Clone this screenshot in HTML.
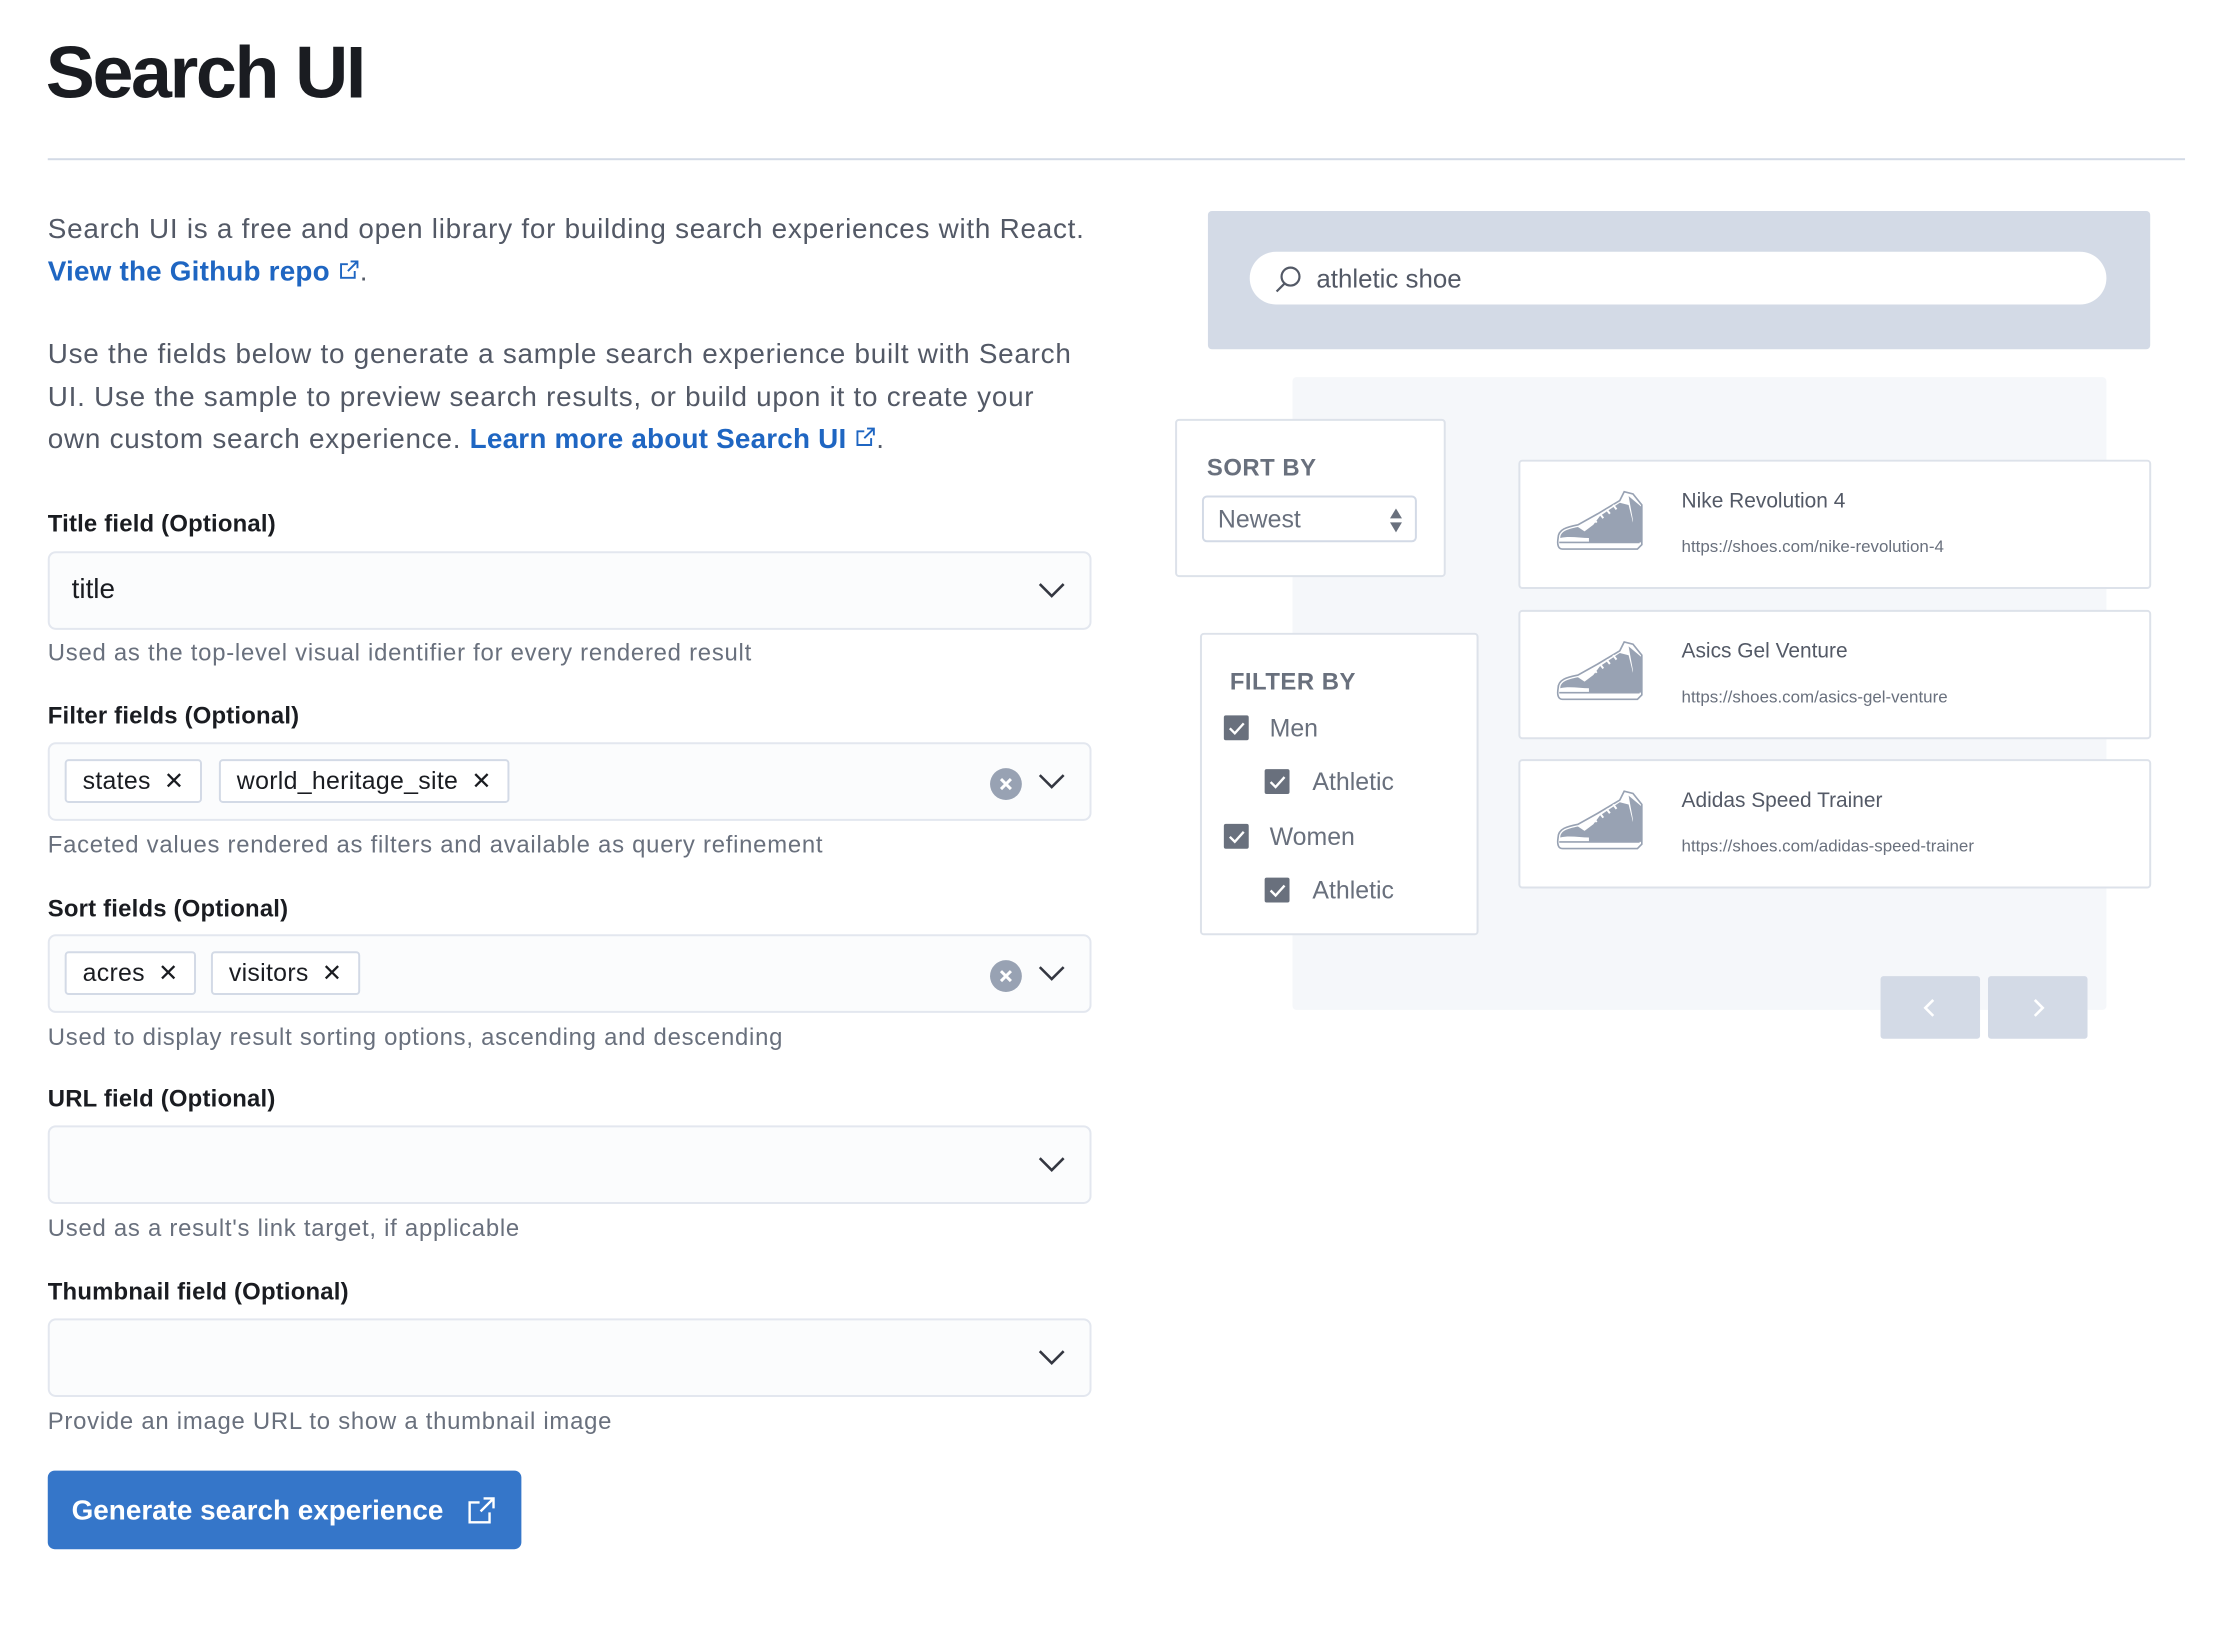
<!DOCTYPE html>
<html><head><meta charset="utf-8"><style>
*{box-sizing:border-box;margin:0;padding:0}
body{width:2234px;height:1630px;background:#fff;font-family:"Liberation Sans",sans-serif;position:relative;overflow:hidden;color:#343741}
#w{position:absolute;left:0;top:0;width:2234px;height:1630px;transform:scale(0.995);transform-origin:0 0}
.a{position:absolute;white-space:nowrap}
h1{position:absolute;left:46px;top:30px;font-size:74px;font-weight:bold;color:#1a1c21;letter-spacing:-2.4px}
.hr{position:absolute;left:48px;top:159px;width:2148px;height:2px;background:#d3dae6}
.p{font-size:28px;color:#535966;letter-spacing:0.75px}
.lnk{color:#1f66c2;font-weight:bold;letter-spacing:0.2px}
.lbl{font-size:24px;font-weight:bold;color:#1a1c21;letter-spacing:0.2px}
.help{font-size:24px;color:#69707d;letter-spacing:0.75px}
.box{position:absolute;left:48px;width:1049px;height:79px;background:#fbfcfd;border:2px solid #e3e7ef;border-radius:8px}
.chev{position:absolute;right:24px;top:28px}
.chip{position:absolute;top:15px;height:44px;border:2px solid #d3dae6;border-radius:4px;background:#fff;font-size:25px;color:#1a1c21;padding:0 16px;line-height:40px;letter-spacing:0.3px}
.clr{position:absolute;right:68px;top:24px;width:32px;height:32px;border-radius:50%;background:#98a2b3}
.card{position:absolute;left:1526px;width:636px;height:130px;background:#fff;border:2px solid #dde2ea;border-radius:4px}
.ct{position:absolute;left:162px;top:28px;font-size:21px;color:#535966}
.cu{position:absolute;left:162px;top:76px;font-size:17px;color:#69707d}
.shoe{position:absolute;left:30px;top:28px}
.cb{position:absolute;width:25px;height:25px;background:#69707d;border-radius:2px}
.ft{font-size:25px;color:#69707d}
</style></head><body><div id="w">
<h1>Search UI</h1>
<div class="hr"></div>

<div class="a p" style="left:48px;top:214px">Search UI is a free and open library for building search experiences with React.</div>
<div class="a p" style="left:48px;top:257px"><span class="lnk">View the Github repo <svg width="22" height="22" viewBox="0 0 16 16" fill="none" stroke="#1f66c2" stroke-width="1.4"><path d="M9 2h5v5M14 2L7 9M12 9v5H2V4h5"/></svg></span>.</div>
<div class="a p" style="left:48px;top:340px">Use the fields below to generate a sample search experience built with Search</div>
<div class="a p" style="left:48px;top:383px">UI. Use the sample to preview search results, or build upon it to create your</div>
<div class="a p" style="left:48px;top:425px">own custom search experience. <span class="lnk">Learn more about Search UI <svg width="22" height="22" viewBox="0 0 16 16" fill="none" stroke="#1f66c2" stroke-width="1.4"><path d="M9 2h5v5M14 2L7 9M12 9v5H2V4h5"/></svg></span>.</div>

<div class="a lbl" style="left:48px;top:513px">Title field (Optional)</div>
<div class="box" style="top:554px"><div class="a" style="left:22px;top:20px;font-size:28px;color:#1a1c21">title</div>
<svg class="chev" width="28" height="18" viewBox="0 0 28 18"><path d="M2 3l12 12 12-12" fill="none" stroke="#343741" stroke-width="2.6"/></svg></div>
<div class="a help" style="left:48px;top:643px">Used as the top-level visual identifier for every rendered result</div>

<div class="a lbl" style="left:48px;top:706px">Filter fields (Optional)</div>
<div class="box" style="top:746px">
<div class="chip" style="left:15px">states <span style="font-size:24px;margin-left:6px">✕</span></div>
<div class="chip" style="left:170px">world_heritage_site <span style="font-size:24px;margin-left:6px">✕</span></div>
<div class="clr"><svg width="32" height="32"><path d="M11 11l10 10M21 11l-10 10" stroke="#fff" stroke-width="3"/></svg></div>
<svg class="chev" width="28" height="18" viewBox="0 0 28 18"><path d="M2 3l12 12 12-12" fill="none" stroke="#343741" stroke-width="2.6"/></svg></div>
<div class="a help" style="left:48px;top:836px">Faceted values rendered as filters and available as query refinement</div>

<div class="a lbl" style="left:48px;top:900px">Sort fields (Optional)</div>
<div class="box" style="top:939px">
<div class="chip" style="left:15px">acres <span style="font-size:24px;margin-left:6px">✕</span></div>
<div class="chip" style="left:162px">visitors <span style="font-size:24px;margin-left:6px">✕</span></div>
<div class="clr"><svg width="32" height="32"><path d="M11 11l10 10M21 11l-10 10" stroke="#fff" stroke-width="3"/></svg></div>
<svg class="chev" width="28" height="18" viewBox="0 0 28 18"><path d="M2 3l12 12 12-12" fill="none" stroke="#343741" stroke-width="2.6"/></svg></div>
<div class="a help" style="left:48px;top:1029px">Used to display result sorting options, ascending and descending</div>

<div class="a lbl" style="left:48px;top:1091px">URL field (Optional)</div>
<div class="box" style="top:1131px"><svg class="chev" width="28" height="18" viewBox="0 0 28 18"><path d="M2 3l12 12 12-12" fill="none" stroke="#343741" stroke-width="2.6"/></svg></div>
<div class="a help" style="left:48px;top:1221px">Used as a result's link target, if applicable</div>

<div class="a lbl" style="left:48px;top:1285px">Thumbnail field (Optional)</div>
<div class="box" style="top:1325px"><svg class="chev" width="28" height="18" viewBox="0 0 28 18"><path d="M2 3l12 12 12-12" fill="none" stroke="#343741" stroke-width="2.6"/></svg></div>
<div class="a help" style="left:48px;top:1415px">Provide an image URL to show a thumbnail image</div>

<div class="a" style="left:48px;top:1478px;width:476px;height:79px;background:#3576c9;border-radius:7px;color:#fff;font-size:28px;font-weight:bold;line-height:79px;padding-left:24px">Generate search experience
<svg style="position:absolute;left:422px;top:26px" width="28" height="28" viewBox="0 0 28 28" fill="none" stroke="#fff" stroke-width="2.4"><path d="M16 2h10v10M26 2L13 15M22 16v10H2V6h10"/></svg></div>

<div class="a" style="left:1214px;top:212px;width:947px;height:139px;background:#d3dae6;border-radius:4px"></div>
<div class="a" style="left:1256px;top:253px;width:861px;height:53px;background:#fff;border-radius:27px">
<svg style="position:absolute;left:24px;top:13px" width="30" height="30" viewBox="0 0 30 30" fill="none" stroke="#535966" stroke-width="2.2"><circle cx="17" cy="12" r="9"/><path d="M11 19L3 27"/></svg>
<div class="a" style="left:67px;top:12px;font-size:26px;color:#535966">athletic shoe</div></div>

<div class="a" style="left:1299px;top:379px;width:818px;height:636px;background:#f5f7fa;border-radius:4px"></div>

<div class="a" style="left:1181px;top:421px;width:272px;height:159px;background:#fff;border:2px solid #dde2ea;border-radius:4px">
<div class="a" style="left:30px;top:34px;font-size:24px;font-weight:bold;color:#69707d;letter-spacing:0.5px">SORT BY</div>
<div class="a" style="left:25px;top:75px;width:216px;height:47px;border:2px solid #d3dae6;border-radius:5px">
<div class="a" style="left:14px;top:8px;font-size:25px;color:#69707d">Newest</div>
<svg style="position:absolute;left:186px;top:10px" width="14" height="26" viewBox="0 0 14 26" fill="#69707d"><path d="M7 1l6 10H1zM1 15h12L7 25z"/></svg></div></div>

<div class="a" style="left:1206px;top:636px;width:280px;height:304px;background:#fff;border:2px solid #dde2ea;border-radius:4px">
<div class="a" style="left:28px;top:34px;font-size:24px;font-weight:bold;color:#69707d;letter-spacing:0.5px">FILTER BY</div></div>
<div class="cb" style="left:1230px;top:719px"><svg width="25" height="25"><path d="M6 13l5 5 9-10" fill="none" stroke="#fff" stroke-width="2.4"/></svg></div>
<div class="a ft" style="left:1276px;top:718px">Men</div>
<div class="cb" style="left:1271px;top:773px"><svg width="25" height="25"><path d="M6 13l5 5 9-10" fill="none" stroke="#fff" stroke-width="2.4"/></svg></div>
<div class="a ft" style="left:1319px;top:772px">Athletic</div>
<div class="cb" style="left:1230px;top:828px"><svg width="25" height="25"><path d="M6 13l5 5 9-10" fill="none" stroke="#fff" stroke-width="2.4"/></svg></div>
<div class="a ft" style="left:1276px;top:827px">Women</div>
<div class="cb" style="left:1271px;top:882px"><svg width="25" height="25"><path d="M6 13l5 5 9-10" fill="none" stroke="#fff" stroke-width="2.4"/></svg></div>
<div class="a ft" style="left:1319px;top:881px">Athletic</div>

<svg width="0" height="0" style="position:absolute"><defs><g id="shoe">
<path d="M2 44 C2 36 10 34 20 32 L38 22 L58 10 L62 2 L70 4 L78 14 L78 50 L74 54 L6 54 C2 54 1 50 2 44Z" fill="#fff" stroke="#98a2b3" stroke-width="1.5"/>
<path d="M40 24 L58 12 L66 14 L70 30 L70 48 L30 48 L30 44 C22 44 12 42 4 44 C4 38 10 36 20 34 L26 38 L34 32Z" fill="#98a2b3"/>
<path d="M66 6 L78 16 L78 48 L70 48 L70 28Z" fill="#98a2b3"/>
<path d="M3 48 L76 48" stroke="#98a2b3" stroke-width="1.5"/>
<path d="M34 26l3 4M40 22l3 4M46 18l3 4M52 14l3 4" stroke="#fff" stroke-width="1.8"/>
</g></defs></svg>

<div class="card" style="top:462px"><svg class="shoe" width="100" height="62" viewBox="0 0 80 56"><use href="#shoe"/></svg><div class="ct">Nike Revolution 4</div><div class="cu">https://shoes.com/nike-revolution-4</div></div>
<div class="card" style="top:613px"><svg class="shoe" width="100" height="62" viewBox="0 0 80 56"><use href="#shoe"/></svg><div class="ct">Asics Gel Venture</div><div class="cu">https://shoes.com/asics-gel-venture</div></div>
<div class="card" style="top:763px"><svg class="shoe" width="100" height="62" viewBox="0 0 80 56"><use href="#shoe"/></svg><div class="ct">Adidas Speed Trainer</div><div class="cu">https://shoes.com/adidas-speed-trainer</div></div>

<div class="a" style="left:1890px;top:981px;width:100px;height:63px;background:#d3dae6;border-radius:3px"><svg style="position:absolute;left:42px;top:22px" width="14" height="20"><path d="M11 2L3 10l8 8" fill="none" stroke="#fff" stroke-width="2.6"/></svg></div>
<div class="a" style="left:1998px;top:981px;width:100px;height:63px;background:#d3dae6;border-radius:3px"><svg style="position:absolute;left:44px;top:22px" width="14" height="20"><path d="M3 2l8 8-8 8" fill="none" stroke="#fff" stroke-width="2.6"/></svg></div>
</div></body></html>
